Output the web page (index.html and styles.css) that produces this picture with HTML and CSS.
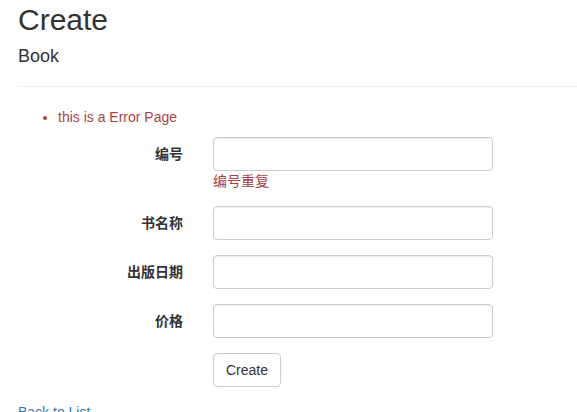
FILE: index.html
```html
<!DOCTYPE html>
<html lang="zh">
<head>
<meta charset="utf-8">
<title>Create</title>
<link rel="stylesheet" href="styles.css">
</head>
<body>
<div class="container">
  <h2 class="title">Create</h2>
  <h4 class="subtitle">Book</h4>
  <hr class="divider">
  <div class="summary">
    <ul class="summary-list">
      <li>this is a Error Page</li>
    </ul>
  </div>
  <form class="form-horizontal">
    <div class="form-group">
      <label class="control-label">编号</label>
      <div class="field">
        <input class="form-control" type="text">
        <span class="field-error">编号重复</span>
      </div>
    </div>
    <div class="form-group">
      <label class="control-label">书名称</label>
      <div class="field"><input class="form-control" type="text"></div>
    </div>
    <div class="form-group">
      <label class="control-label">出版日期</label>
      <div class="field"><input class="form-control" type="text"></div>
    </div>
    <div class="form-group">
      <label class="control-label">价格</label>
      <div class="field"><input class="form-control" type="text"></div>
    </div>
    <div class="form-group">
      <div class="control-label"></div>
      <div class="field"><button type="button" class="btn">Create</button></div>
    </div>
  </form>
  <div class="back"><a href="#" class="back-link">Back to List</a></div>
</div>
</body>
</html>
```
FILE: styles.css
```css
html, body {
  margin: 0;
  overflow: hidden;
}
body {
  font-family: "Liberation Sans", Arial, "Noto Sans CJK SC", sans-serif;
  font-size: 14px;
  line-height: 20px;
  color: #333;
  background: #fff;
}
.container {
  padding: 0 0 0 18px;
}
.title {
  font-size: 30px;
  font-weight: 500;
  line-height: 33px;
  margin: 3px 0 10px;
}
.subtitle {
  font-size: 18px;
  font-weight: 500;
  line-height: 20px;
  margin: 10px 0 10px;
}
.divider {
  border: 0;
  border-top: 1px solid #eee;
  margin: 20px 0;
  height: 0;
}
.summary {
  color: #a94442;
}
.summary-list {
  margin: 0 0 10px;
  padding-left: 40px;
}
.form-horizontal {
  margin: 0 0 0 -15px;
}
.form-group {
  display: flex;
  margin-bottom: 15px;
}
.control-label {
  width: 195px;
  flex: none;
  box-sizing: border-box;
  padding: 7px 15px 0;
  text-align: right;
  font-weight: bold;
}
.field {
  padding: 0 15px;
}
.form-control {
  display: block;
  box-sizing: border-box;
  width: 280px;
  height: 34px;
  padding: 6px 12px;
  font-size: 14px;
  border: 1px solid #ccc;
  border-radius: 4px;
  box-shadow: inset 0 1px 1px rgba(0,0,0,.075);
  margin: 0;
}
.field-error {
  display: block;
  color: #a94442;
}
.btn {
  display: inline-block;
  height: 34px;
  padding: 6px 12px;
  font-family: "Liberation Sans", Arial, sans-serif;
  font-size: 14px;
  line-height: 20px;
  color: #333;
  background: #fff;
  border: 1px solid #ccc;
  border-radius: 4px;
  margin: 0;
}
.back-link {
  color: #337ab7;
  text-decoration: none;
}
```
